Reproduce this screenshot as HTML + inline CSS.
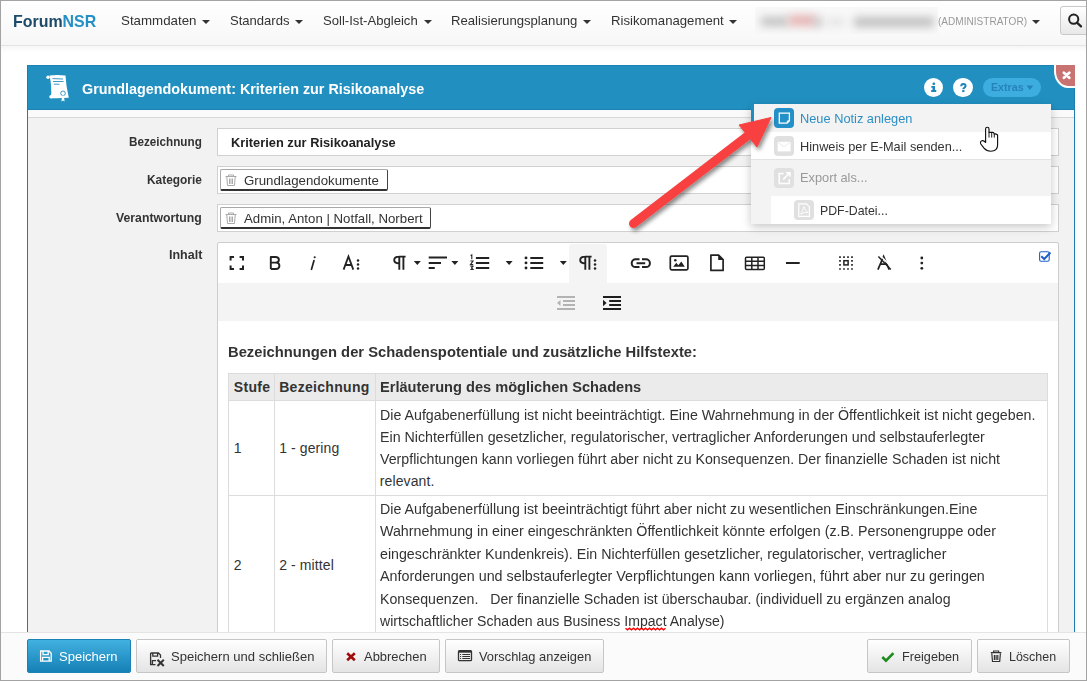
<!DOCTYPE html>
<html><head><meta charset="utf-8">
<style>
*{margin:0;padding:0;box-sizing:border-box}
html,body{width:1087px;height:681px;overflow:hidden;background:#fff;font-family:"Liberation Sans",sans-serif}
.a{position:absolute}
.t{position:absolute;white-space:pre;line-height:1;transform-origin:0 0;font-family:"Liberation Sans",sans-serif}
.caret{position:absolute;width:0;height:0;border-left:4px solid transparent;border-right:4px solid transparent;border-top:4.4px solid #333;margin-left:-0.3px}
.btn{position:absolute;top:639px;height:34px;border:1px solid #c6c6c6;border-radius:2px;background:linear-gradient(#fff,#e4e4e4)}
svg{position:absolute;overflow:visible}
</style></head><body>
<!-- navbar -->
<div class="a" style="left:0;top:0;width:1087px;height:46px;background:linear-gradient(#fff,#f7f7f7);border-bottom:1px solid #e3e3e3"></div>
<div class="a" style="left:0;top:46px;width:1087px;height:6px;background:linear-gradient(rgba(0,0,0,.035),rgba(0,0,0,0))"></div>
<div class="caret" style="left:202.7px;top:19.5px"></div>
<div class="caret" style="left:295.6px;top:19.5px"></div>
<div class="caret" style="left:424px;top:19.5px"></div>
<div class="caret" style="left:583.4px;top:19.5px"></div>
<div class="caret" style="left:729.7px;top:19.5px"></div>
<div class="caret" style="left:1032px;top:19.5px"></div>
<!-- blurred user name -->
<div class="a" style="left:754.5px;top:6.7px;width:183px;height:27px;background:#f8f8f8;overflow:hidden">
  <div class="a" style="left:6px;top:10px;width:28px;height:9px;background:#c0c0c0;filter:blur(4px)"></div>
  <div class="a" style="left:34px;top:8px;width:27px;height:11px;background:#e6b4b4;filter:blur(4px)"></div>
  <div class="a" style="left:58px;top:11px;width:10px;height:8px;background:#c8c8c8;filter:blur(4px)"></div>
  <div class="a" style="left:73px;top:12px;width:16px;height:6px;background:#dedede;filter:blur(4px)"></div>
  <div class="a" style="left:99px;top:10px;width:80px;height:10px;background:#c0c0c0;filter:blur(4px)"></div>
</div>
<!-- search button -->
<div class="a" style="left:1060px;top:5.5px;width:30px;height:29.5px;border:1px solid #c8c8c8;border-radius:3px;background:linear-gradient(#fff,#e8e8e8)"></div>
<svg style="left:0;top:0" width="1087" height="60"><circle cx="1073.7" cy="19.2" r="4.6" fill="none" stroke="#222" stroke-width="2"/><line x1="1077" y1="22.6" x2="1081" y2="26.4" stroke="#222" stroke-width="2.2" stroke-linecap="round"/></svg>

<!-- modal -->
<div class="a" style="left:27px;top:65px;width:1048px;height:567px;border-left:1px solid #1b7db0;border-right:1px solid #1b7db0;background:#f2f2f2"></div>
<div class="a" style="left:27px;top:65px;width:1048px;height:45px;background:#2190c1;border-top:1px solid #1a82b6;border-bottom:1px solid #1a82b6;border-left:1px solid #1b7db0;border-right:1px solid #1b7db0"></div>
<div class="a" style="left:28px;top:110px;width:1046px;height:7px;background:#fafafa"></div>
<div class="a" style="left:28px;top:117px;width:1046px;height:1px;background:#d8d8d8"></div>
<!-- close -->
<div class="a" style="left:1054px;top:65px;width:21px;height:23px;background:#fff;border-bottom-left-radius:14px 17px"></div>
<div class="a" style="left:1056px;top:65px;width:19px;height:20.7px;background:#c87272;border-bottom-left-radius:12px 15px"></div>
<svg style="left:0;top:0" width="1087" height="100"><path d="M1063.9 72.8 L1069.3 77.8 M1069.3 72.8 L1063.9 77.8" stroke="#fff" stroke-width="2.8" stroke-linecap="round"/></svg>
<!-- scroll icon -->
<svg style="left:0;top:0" width="120" height="110">
  <path d="M49.5 75.5 Q57 74.5 65.5 75.5 Q66 86 68.8 97.8 Q60 98.5 51 98.2 Q52 86 49.5 75.5 Z" fill="#fff"/>
  <circle cx="48" cy="77.2" r="1.7" fill="#fff"/>
  <circle cx="51" cy="96.8" r="1.7" fill="#fff"/>
  <path d="M52.5 78.6 L63 79 M53 81.5 L63.5 81.5 M53.8 84.2 L59.5 84.2" stroke="#2a8cc0" stroke-width="0.9"/>
  <circle cx="63" cy="93.3" r="2.3" fill="none" stroke="#2a8cc0" stroke-width="0.9"/>
  <path d="M62.2 95.6 L61.4 101.6 L63 100.6 L64.6 101.6 L63.8 95.6 Z" fill="#fff"/>
</svg>
<!-- header circles -->
<div class="a" style="left:923.8px;top:77.8px;width:19.4px;height:19.4px;border-radius:50%;background:#fff"></div>
<div class="a" style="left:953px;top:77.6px;width:19.8px;height:19.8px;border-radius:50%;background:#fff"></div>
<svg style="left:0;top:0" width="1087" height="100">
 <rect x="932.5" y="82.4" width="2.6" height="2.6" rx="1" fill="#1f86bd"/>
 <path d="M931.3 86.1 H935.1 V90.1 H936.3 V92 H931.2 V90.1 H932.5 V87.7 H931.3 Z" fill="#1f86bd"/>
 <path d="M961.2 86.3 Q961.2 83.9 963.4 83.9 Q965.6 83.9 965.6 85.8 Q965.6 87.1 964.2 87.8 Q963.3 88.3 963.3 89.3" fill="none" stroke="#1f86bd" stroke-width="2"/>
 <rect x="962.2" y="90.1" width="2.3" height="2" fill="#1f86bd"/>
</svg>

<div class="a" style="left:982.8px;top:77.8px;width:58px;height:19.2px;border-radius:10px;background:#3dade0"></div>
<svg style="left:0;top:0" width="1087" height="100"><path d="M1026.5 85.6 H1033.3 L1029.9 89.9 Z" fill="#2683b9"/></svg>

<!-- inputs -->
<div class="a" style="left:217px;top:128px;width:841.5px;height:27.5px;background:#fff;border:1px solid #d0d0d0"></div>
<div class="a" style="left:217px;top:166.4px;width:841.5px;height:27.2px;background:#fff;border:1px solid #d0d0d0"></div>
<div class="a" style="left:217px;top:204.2px;width:841.5px;height:27.4px;background:#fff;border:1px solid #d0d0d0"></div>
<div class="a" style="left:220.3px;top:169.3px;width:167.5px;height:22.2px;background:#fff;border:1px solid #a8a8a8;border-right-color:#444;border-bottom:2px solid #333;border-radius:2px"></div>
<div class="a" style="left:220.3px;top:207.1px;width:210.5px;height:22.4px;background:#fff;border:1px solid #a8a8a8;border-right-color:#444;border-bottom:2px solid #333;border-radius:2px"></div>
<svg style="left:0;top:0" width="300" height="240">
  <g fill="none" stroke="#a9a9a9" stroke-width="1">
    <path d="M225.5 176.5 H236.5 M228.5 176.5 V175 H233.5 V176.5 M226.8 177 L227.5 185.5 H234.5 L235.2 177 M229.5 178.5 V184 M231 178.5 V184 M232.5 178.5 V184"/>
    <path d="M225.5 214.5 H236.5 M228.5 214.5 V213 H233.5 V214.5 M226.8 215 L227.5 223.5 H234.5 L235.2 215 M229.5 216.5 V222 M231 216.5 V222 M232.5 216.5 V222"/>
  </g>
</svg>

<!-- editor -->
<div class="a" style="left:217px;top:242px;width:841.5px;height:400px;background:#fff;border:1px solid #cdcdcd;border-radius:2px"></div>
<div class="a" style="left:218px;top:283px;width:840px;height:38px;background:#f4f4f4"></div>
<div class="a" style="left:569.3px;top:243.5px;width:37.6px;height:39.5px;background:#f4f4f4;border-radius:3px 3px 0 0"></div>
<!-- toolbar icons -->
<svg style="left:0;top:0" width="1087" height="330">
 <g fill="none" stroke="#222" stroke-width="2">
  <path d="M230.6 260.5 V257 H234 M239.6 257 H243 V260.5 M243 265.5 V269 H239.6 M234 269 H230.6 V265.5"/>
 </g>
 <g fill="#222" stroke="none">
 </g>
 <!-- carets -->
 <g fill="#222">
  <path d="M413.8 261 H420.8 L417.3 265 Z"/>
  <path d="M451.4 261 H458.4 L454.9 265 Z"/>
  <path d="M505.6 261 H512.6 L509.1 265 Z"/>
  <path d="M559.8 261 H566.8 L563.3 265 Z"/>
 </g>
 <!-- align -->
 <g stroke="#222" stroke-width="2">
  <path d="M428.7 257.6 H447 M428.7 262.9 H441 M428.7 268.1 H434.8"/>
  <path d="M475.9 257.9 H489.2 M475.9 262.9 H489.2 M475.9 268 H489.2"/>
  <path d="M530.3 257.9 H543.2 M530.3 262.9 H543.2 M530.3 268 H543.2"/>
 </g>
 <g fill="#222">
  <circle cx="526" cy="257.9" r="1.45"/><circle cx="526" cy="262.9" r="1.45"/><circle cx="526" cy="268" r="1.45"/>
 </g>
 <g fill="none" stroke="#222" stroke-width="1.1">
  <path d="M470.6 255.6 L471.8 255 V259.2 M470.4 261 H473 L470.4 264.6 H473.2 M470.4 266.3 H473 L471.5 268 L473 269.5 H470.4"/>
 </g>
 <!-- link -->
 <g fill="none" stroke="#222" stroke-width="2">
  <path d="M639.5 259.3 H635.6 A3.9 3.9 0 0 0 635.6 267.1 H639.5 M642 259.3 H646 A3.9 3.9 0 0 1 646 267.1 H642 M636.5 263.2 H645.2"/>
 </g>
 <!-- image -->
 <rect x="670.3" y="256.1" width="17.6" height="13.8" fill="none" stroke="#222" stroke-width="1.7" rx="1.3"/>
 <circle cx="675.3" cy="260.3" r="1.25" fill="#222"/>
 <path d="M673.2 266.8 L676.3 262.8 L678.3 265.2 L681.3 261.6 L684.8 266.8 Z" fill="#222"/>
 <!-- file -->
 <path d="M710.9 255.1 H718.6 L723.1 259.6 V270.4 H710.9 Z" fill="none" stroke="#222" stroke-width="1.7" stroke-linejoin="round"/>
 <path d="M718.2 254.6 L723.6 260 H718.2 Z" fill="#222"/>
 <!-- table -->
 <g fill="none" stroke="#222" stroke-width="1.5">
  <rect x="745.5" y="257.2" width="18.8" height="12.2" rx="1"/>
  <path d="M745.5 261.3 H764.3 M745.5 265.4 H764.3 M751.8 257.2 V269.4 M758 257.2 V269.4"/>
 </g>
 <!-- hr -->
 <path d="M786 263 H799.7" stroke="#222" stroke-width="2"/>
 <!-- select all -->
 <path d="M839.15 256.25 h1.7 v1.7 h-1.7z M843.15 256.25 h1.7 v1.7 h-1.7z M847.15 256.25 h1.7 v1.7 h-1.7z M851.15 256.25 h1.7 v1.7 h-1.7z M839.15 260.00 h1.7 v1.7 h-1.7z M851.15 260.00 h1.7 v1.7 h-1.7z M839.15 264.00 h1.7 v1.7 h-1.7z M851.15 264.00 h1.7 v1.7 h-1.7z M839.15 268.15 h1.7 v1.7 h-1.7z M843.15 268.15 h1.7 v1.7 h-1.7z M847.15 268.15 h1.7 v1.7 h-1.7z M851.15 268.15 h1.7 v1.7 h-1.7z " fill="#222"/>
 <rect x="843.9" y="260.7" width="4.2" height="4.2" fill="none" stroke="#222" stroke-width="1.5"/>
 <!-- clear format -->
 <path d="M877.9 269.6 L883.6 256.4 L889.2 269.6 M880 264.1 H887.1" fill="none" stroke="#222" stroke-width="1.7"/>
 <path d="M879.4 254.8 L892.4 267.8" stroke="#fff" stroke-width="1.6"/>
 <path d="M878.4 256.6 L890.8 269.4" stroke="#222" stroke-width="1.5"/>
 <!-- more -->
 <g fill="#222"><circle cx="921.8" cy="258" r="1.4"/><circle cx="921.8" cy="263.1" r="1.4"/><circle cx="921.8" cy="268.3" r="1.4"/></g>
 <!-- outdent / indent -->
 <g stroke="#b3b3b3" stroke-width="2"><path d="M557 296.9 H575 M563 301 H575 M563 305 H575 M557 309 H575"/></g>
 <path d="M560.5 300 V306 L557 303 Z" fill="#b3b3b3"/>
 <g stroke="#1e1e1e" stroke-width="2"><path d="M603 296.9 H621 M609.2 301 H621 M609.2 305 H621 M603 309 H621"/></g>
 <path d="M603 299.8 V306.2 L606.6 303 Z" fill="#1e1e1e"/>
 <!-- checkbox -->
 <rect x="1039.6" y="251.8" width="9.6" height="9.4" rx="1.5" fill="none" stroke="#1f5fc9" stroke-width="1.1"/>
 <path d="M1041.3 256.3 L1044.2 259 L1050.5 252.5" fill="none" stroke="#1f5fc9" stroke-width="2"/>
</svg>
<svg style="left:0;top:0" width="1087" height="330">
 <path d="M270.8 269 V257 H275.4 Q278.9 257 278.9 259.8 Q278.9 262.6 275.4 262.6 H270.8 M275.4 262.6 H276 Q279.4 262.6 279.4 265.8 Q279.4 269 276 269 H270.8" fill="none" stroke="#222" stroke-width="1.9" stroke-linejoin="round"/>
 <path d="M314 260.6 L311.5 269.3" stroke="#222" stroke-width="1.7" stroke-linecap="round"/>
 <circle cx="314.7" cy="257.3" r="1.05" fill="#222"/>
 <path d="M343.6 269.6 L348.45 256.5 L353.3 269.6 M345.3 265 H351.6" fill="none" stroke="#222" stroke-width="1.8"/>
 <g fill="#222"><circle cx="358" cy="260.4" r="1.25"/><circle cx="358" cy="264.4" r="1.25"/><circle cx="358" cy="268.5" r="1.25"/>
 <circle cx="595" cy="260.4" r="1.25"/><circle cx="595" cy="264.4" r="1.25"/><circle cx="595" cy="268.5" r="1.25"/></g>
 <g fill="none" stroke="#222" stroke-width="1.9">
  <path d="M584.8 256.6 H591.6 M585.3 256.6 V269.8 M589.4 256.6 V269.8 M585.3 256.6 Q580.2 256.6 580.2 260.1 Q580.2 263.5 585.3 263.5"/>
  <path d="M398.8 256.6 H405.6 M399.3 256.6 V269.8 M403.4 256.6 V269.8 M399.3 256.6 Q394.2 256.6 394.2 260.1 Q394.2 263.5 399.3 263.5"/>
 </g>
</svg>
<!-- table -->
<div class="a" style="left:228px;top:373px;width:819.5px;height:300px;border:1px solid #dcdcdc;background:#fff"></div>
<div class="a" style="left:229px;top:374px;width:817.5px;height:26.5px;background:#ebebeb;border-bottom:1px solid #dcdcdc"></div>
<div class="a" style="left:228px;top:495.2px;width:819.5px;height:1px;background:#dcdcdc"></div>
<div class="a" style="left:274.2px;top:373px;width:1px;height:300px;background:#dcdcdc"></div>
<div class="a" style="left:375.2px;top:373px;width:1px;height:300px;background:#dcdcdc"></div>
<!-- spell squiggle -->
<svg style="left:0;top:0" width="1087" height="640"><path d="M625.5 628.2 l2 1.6 l2 -1.6 l2 1.6 l2 -1.6 l2 1.6 l2 -1.6 l2 1.6 l2 -1.6 l2 1.6 l2 -1.6 l2 1.6 l2 -1.6 l2 1.6 l2 -1.6 l2 1.6 l2 -1.6 l2 1.6 l2 -1.6 l2 1.6 l2 -1.6" fill="none" stroke="#f00" stroke-width="1.3"/></svg>

<div class="t" style="left:12.8px;top:13.1px;font-size:17px;font-weight:700;color:#1c4a68;transform:scaleX(0.9372);">Forum<span style="color:#2590c6">NSR</span></div>
<div class="t" style="left:121.0px;top:14.4px;font-size:13px;font-weight:400;color:#333;transform:scaleX(1.0244);">Stammdaten</div>
<div class="t" style="left:230.3px;top:14.4px;font-size:13px;font-weight:400;color:#333;transform:scaleX(1.0040);">Standards</div>
<div class="t" style="left:323.3px;top:14.4px;font-size:13px;font-weight:400;color:#333;transform:scaleX(1.0082);">Soll-Ist-Abgleich</div>
<div class="t" style="left:451.2px;top:14.4px;font-size:13px;font-weight:400;color:#333;transform:scaleX(1.0102);">Realisierungsplanung</div>
<div class="t" style="left:611.3px;top:14.4px;font-size:13px;font-weight:400;color:#333;transform:scaleX(1.0128);">Risikomanagement</div>
<div class="t" style="left:938.0px;top:15.5px;font-size:11px;font-weight:400;color:#999;transform:scaleX(0.9141);">(ADMINISTRATOR)</div>
<div class="t" style="left:81.6px;top:81.6px;font-size:14.5px;font-weight:700;color:#fff;transform:scaleX(0.9900);">Grundlagendokument: Kriterien zur Risikoanalyse</div>
<div class="t" style="left:991.2px;top:82.3px;font-size:11px;font-weight:700;color:#2683b9;transform:scaleX(0.9693);">Extras</div>
<div class="t" style="left:129.4px;top:134.6px;font-size:13px;font-weight:700;color:#333;transform:scaleX(0.8999);">Bezeichnung</div>
<div class="t" style="left:147.3px;top:172.6px;font-size:13px;font-weight:700;color:#333;transform:scaleX(0.9156);">Kategorie</div>
<div class="t" style="left:116.4px;top:210.6px;font-size:13px;font-weight:700;color:#333;transform:scaleX(0.9428);">Verantwortung</div>
<div class="t" style="left:168.9px;top:248.0px;font-size:13px;font-weight:700;color:#333;transform:scaleX(0.9606);">Inhalt</div>
<div class="t" style="left:231.0px;top:135.9px;font-size:13.5px;font-weight:700;color:#222;transform:scaleX(0.9503);">Kriterien zur Risikoanalyse</div>
<div class="t" style="left:243.9px;top:173.5px;font-size:13.5px;font-weight:400;color:#333;transform:scaleX(0.9822);">Grundlagendokumente</div>
<div class="t" style="left:243.9px;top:211.5px;font-size:13.5px;font-weight:400;color:#333;transform:scaleX(0.9807);">Admin, Anton | Notfall, Norbert</div>
<div class="t" style="left:228.2px;top:345.1px;font-size:14px;font-weight:700;color:#333;transform:scaleX(1.0538);">Bezeichnungen der Schadenspotentiale und zusätzliche Hilfstexte:</div>
<div class="t" style="left:233.8px;top:379.8px;font-size:14px;font-weight:700;color:#333;letter-spacing:0.3px">Stufe</div>
<div class="t" style="left:279.2px;top:379.8px;font-size:14px;font-weight:700;color:#333;letter-spacing:0.3px">Bezeichnung</div>
<div class="t" style="left:379.8px;top:379.8px;font-size:14px;font-weight:700;color:#333;transform:scaleX(1.0427);">Erläuterung des möglichen Schadens</div>
<div class="t" style="left:233.8px;top:441.1px;font-size:14px;font-weight:400;color:#333;">1</div>
<div class="t" style="left:279.2px;top:441.1px;font-size:14px;font-weight:400;color:#333;letter-spacing:0.1px">1 - gering</div>
<div class="t" style="left:233.8px;top:558.4px;font-size:14px;font-weight:400;color:#333;">2</div>
<div class="t" style="left:279.2px;top:558.4px;font-size:14px;font-weight:400;color:#333;letter-spacing:0.1px">2 - mittel</div>
<div class="t" style="left:379.8px;top:407.9px;font-size:14px;font-weight:400;color:#333;transform:scaleX(1.0159);">Die Aufgabenerfüllung ist nicht beeinträchtigt. Eine Wahrnehmung in der Öffentlichkeit ist nicht gegeben.</div>
<div class="t" style="left:379.8px;top:429.9px;font-size:14px;font-weight:400;color:#333;transform:scaleX(1.0173);">Ein Nichterfüllen gesetzlicher, regulatorischer, vertraglicher Anforderungen und selbstauferlegter</div>
<div class="t" style="left:379.8px;top:451.8px;font-size:14px;font-weight:400;color:#333;transform:scaleX(1.0135);">Verpflichtungen kann vorliegen führt aber nicht zu Konsequenzen. Der finanzielle Schaden ist nicht</div>
<div class="t" style="left:379.8px;top:473.8px;font-size:14px;font-weight:400;color:#333;letter-spacing:0.1px">relevant.</div>
<div class="t" style="left:379.8px;top:501.8px;font-size:14px;font-weight:400;color:#333;transform:scaleX(1.0154);">Die Aufgabenerfüllung ist beeinträchtigt führt aber nicht zu wesentlichen Einschränkungen.Eine</div>
<div class="t" style="left:379.8px;top:524.3px;font-size:14px;font-weight:400;color:#333;transform:scaleX(1.0185);">Wahrnehmung in einer eingeschränkten Öffentlichkeit könnte erfolgen (z.B. Personengruppe oder</div>
<div class="t" style="left:379.8px;top:546.7px;font-size:14px;font-weight:400;color:#333;transform:scaleX(1.0153);">eingeschränkter Kundenkreis). Ein Nichterfüllen gesetzlicher, regulatorischer, vertraglicher</div>
<div class="t" style="left:379.8px;top:569.2px;font-size:14px;font-weight:400;color:#333;transform:scaleX(1.0225);">Anforderungen und selbstauferlegter Verpflichtungen kann vorliegen, führt aber nur zu geringen</div>
<div class="t" style="left:379.8px;top:591.6px;font-size:14px;font-weight:400;color:#333;transform:scaleX(1.0112);">Konsequenzen.   Der finanzielle Schaden ist überschaubar. (individuell zu ergänzen analog</div>
<div class="t" style="left:379.8px;top:614.1px;font-size:14px;font-weight:400;color:#333;transform:scaleX(1.0062);">wirtschaftlicher Schaden aus Business Impact Analyse)</div>

<!-- footer -->
<div class="a" style="left:0;top:632px;width:1087px;height:49px;background:#fbfbfb;border-top:1px solid #e4e4e4"></div>
<div class="a" style="left:27px;top:639px;width:104px;height:34px;border:1px solid #1b82b8;border-radius:2px;background:linear-gradient(#41b1e1,#1580b5)"></div>
<div class="btn" style="left:136.3px;width:191px"></div>
<div class="btn" style="left:332px;width:108px"></div>
<div class="btn" style="left:445px;width:159px"></div>
<div class="btn" style="left:867px;width:105px"></div>
<div class="btn" style="left:977px;width:93px"></div>
<svg style="left:0;top:0" width="1087" height="681">
 <!-- floppy white -->
 <path d="M40.6 651 H49 L51.2 653.2 V661.2 H40.6 Z M43 651 V654.6 H48.2 V651 M42.6 661.2 V657.4 H49.2 V661.2" fill="none" stroke="#fff" stroke-width="1.3"/>
 <!-- floppy x -->
 <path d="M150.6 653 H158.4 L160.5 655.1 V658 M150.6 653 V664.6 H155.5 M152.8 653 V656.2 H157.6 V653 M152.4 664.6 V660.6 H156" fill="none" stroke="#333" stroke-width="1.3"/>
 <path d="M157.5 659.8 L163.8 666 M163.8 659.8 L157.5 666" stroke="#333" stroke-width="2"/>
 <!-- abbrechen x -->
 <path d="M347.2 653.3 L354.8 660.3 M354.8 653.3 L347.2 660.3" stroke="#a00c0c" stroke-width="2.6"/>
 <!-- list-alt -->
 <rect x="458.5" y="650.7" width="13" height="10" rx="1" fill="none" stroke="#333" stroke-width="1.3"/>
 <rect x="458.5" y="650.7" width="13" height="2" fill="#333"/>
 <path d="M460 654.5 h1.1 M460 656.5 h1.1 M460 658.5 h1.1 M462.3 654.5 h7.8 M462.3 656.5 h7.8 M462.3 658.5 h7.8" stroke="#333" stroke-width="1.1"/>
 <!-- check -->
 <path d="M882.3 657 L886 660.6 L893.4 653.2" fill="none" stroke="#1b8a1b" stroke-width="2.6"/>
 <!-- trash -->
 <path d="M990.8 652.7 H1001.4 M993.6 652.7 V651 H998.6 V652.7 M991.8 653.5 L992.5 661.5 H999.7 L1000.4 653.5 M994.4 655 V660 M996.1 655 V660 M997.8 655 V660" fill="none" stroke="#333" stroke-width="1.2"/>
</svg>
<div class="t" style="left:59.3px;top:650.1px;font-size:13.5px;font-weight:400;color:#fff;transform:scaleX(0.9640);">Speichern</div>
<div class="t" style="left:170.6px;top:649.6px;font-size:13.5px;font-weight:400;color:#333;transform:scaleX(0.9651);">Speichern und schließen</div>
<div class="t" style="left:363.7px;top:649.6px;font-size:13.5px;font-weight:400;color:#333;transform:scaleX(0.9587);">Abbrechen</div>
<div class="t" style="left:478.5px;top:649.6px;font-size:13.5px;font-weight:400;color:#333;transform:scaleX(0.9530);">Vorschlag anzeigen</div>
<div class="t" style="left:902.1px;top:649.6px;font-size:13.5px;font-weight:400;color:#333;transform:scaleX(0.9393);">Freigeben</div>
<div class="t" style="left:1009.2px;top:649.6px;font-size:13.5px;font-weight:400;color:#333;transform:scaleX(0.9228);">Löschen</div>

<!-- dropdown menu -->
<div class="a" style="left:751px;top:104px;width:300px;height:120px;background:#f3f3f3;box-shadow:0 3px 9px rgba(0,0,0,.22)"></div>
<div class="a" style="left:751px;top:131.5px;width:300px;height:28.5px;background:#fff;border-bottom:1px solid #e3e3e3"></div>
<div class="a" style="left:771px;top:196px;width:280px;height:28px;background:#fff"></div>
<div class="a" style="left:751px;top:104px;width:3px;height:27.5px;background:#1f8bc0"></div>
<div class="a" style="left:774px;top:108px;width:20px;height:20px;border-radius:4px;background:#2391c8"></div>
<div class="a" style="left:774px;top:136px;width:20px;height:20px;border-radius:4px;background:#e0e0e0"></div>
<div class="a" style="left:774px;top:168px;width:20px;height:20px;border-radius:4px;background:#e0e0e0"></div>
<div class="a" style="left:794px;top:200px;width:20px;height:20px;border-radius:4px;background:#e0e0e0"></div>
<svg style="left:0;top:0" width="1087" height="240">
 <path d="M779.3 113.2 H789.4 V120.8 L787.1 123.1 H779.3 Z" fill="none" stroke="#fff" stroke-width="1.3"/>
 <path d="M787.3 123 V120.9 H789.3" fill="none" stroke="#fff" stroke-width="0.9"/>
 <rect x="777.6" y="141.8" width="13" height="9.6" fill="#fff"/>
 <path d="M777.8 142.2 L784.1 146.8 L790.4 142.2" fill="none" stroke="#e6e6e6" stroke-width="0.8"/>
 <path d="M783.6 173.5 H779.2 V183.6 H789.3 V179" fill="none" stroke="#fff" stroke-width="1.5"/>
 <path d="M783.2 179.4 L789.6 173 M786 172.8 H790 V176.8" fill="none" stroke="#fff" stroke-width="1.5"/>
 <path d="M798.8 203.8 H806.3 L809.4 206.9 V216.3 H798.8 Z" fill="none" stroke="#fff" stroke-width="1.2"/>
 <path d="M800.8 214.2 Q803 210 804 206.5 Q805 211 808 212.5 Q803.5 212 800.8 214.2" fill="none" stroke="#fff" stroke-width="0.9"/>
</svg>
<div class="t" style="left:800.0px;top:112.1px;font-size:13px;font-weight:400;color:#2b8fc4;transform:scaleX(0.9843);">Neue Notiz anlegen</div>
<div class="t" style="left:800.0px;top:139.5px;font-size:13px;font-weight:400;color:#333;transform:scaleX(0.9815);">Hinweis per E-Mail senden...</div>
<div class="t" style="left:800.0px;top:171.0px;font-size:13px;font-weight:400;color:#999;transform:scaleX(0.9834);">Export als...</div>
<div class="t" style="left:820.0px;top:203.5px;font-size:13px;font-weight:400;color:#333;transform:scaleX(0.9481);">PDF-Datei...</div>

<!-- red arrow -->
<svg style="left:0;top:0" width="1087" height="681">
 <defs><filter id="sh" x="-20%" y="-20%" width="140%" height="140%"><feGaussianBlur in="SourceAlpha" stdDeviation="2"/><feOffset dx="2" dy="3"/><feComponentTransfer><feFuncA type="linear" slope="0.45"/></feComponentTransfer><feMerge><feMergeNode/><feMergeNode in="SourceGraphic"/></feMerge></filter></defs>
 <g filter="url(#sh)">
  <path d="M633.5 223.5 L750 134" stroke="#f84141" stroke-width="9" stroke-linecap="round"/>
  <path d="M771 117.5 L739 125 L757 147 Z" fill="#f84141" stroke="#f84141" stroke-width="1" stroke-linejoin="round"/>
 </g>
</svg>
<!-- hand cursor -->
<svg style="left:0;top:0" width="1087" height="200">
 <path d="M985.6 142.5 V129 Q985.6 127.2 987.3 127.2 Q989 127.2 989 129 V132.4 H992.6 Q994 132.4 994.2 134 Q996 133.6 997.6 135 V145 Q997.6 151 990.8 151.2 Q986.6 151.2 984 148.2 L980.8 144 Q979.8 141.6 981.8 140.8 Q983.8 140.2 985.6 142.5 Z" fill="#fff" stroke="#111" stroke-width="1.15" stroke-linejoin="round"/>
 <path d="M989 132.5 V137.6 M991.7 132.6 V137.6 M994.3 134 V137.6" stroke="#111" stroke-width="0.95"/>
</svg>

<!-- outer border -->
<div class="a" style="left:0;top:0;width:1087px;height:681px;border:1px solid #a3a3a3;border-right-width:1px;pointer-events:none"></div>
</body></html>
